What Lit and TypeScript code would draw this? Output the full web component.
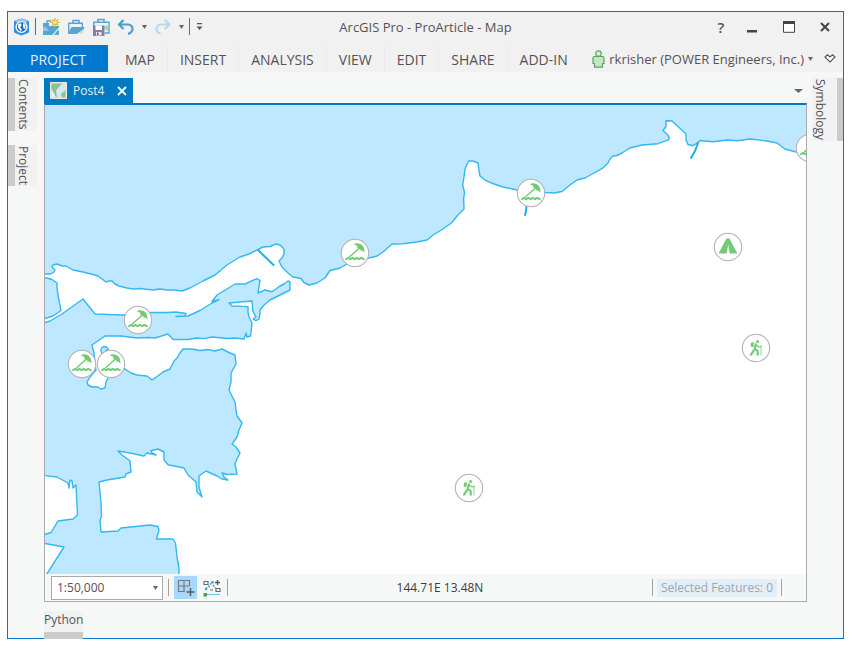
import { LitElement, html, css, svg } from "lit";
import { customElement, property } from "lit/decorators.js";

type MarkerKind = "beach" | "camp" | "trail";

interface Marker {
  kind: MarkerKind;
  x: number;
  y: number;
}

const MARKERS: Marker[] = [
  { kind: "beach", x: 93, y: 215 },
  { kind: "beach", x: 37, y: 259 },
  { kind: "beach", x: 66, y: 259 },
  { kind: "beach", x: 310, y: 148 },
  { kind: "beach", x: 486, y: 88 },
  { kind: "beach", x: 765, y: 43 },
  { kind: "camp", x: 683, y: 142 },
  { kind: "trail", x: 711, y: 243 },
  { kind: "trail", x: 424, y: 383 },
];

const OCEAN =
  "M40 100V274H50.7L54 272L55 270L52 267L53 265L57 264L62 266L66 266L73 270L83 272L93 274.5L98 276L102 279L106 282L109 281L112 281L115 284L119 286L127 288L133 289L140 288.5L153 290L160 289L167 290L174 290L182 291L190 288L203 281L215 275L221 270L227 265L240 257L249 254L257 250L263 247L270 246.5L276 244L280 245L284 249L284 254L282 258L279 261L282 267L288 273L293 277L301 278.5L304 282.5L309 285L317 283L325 278L330 270.5L340 268L347 264L355 260L369 258L377 256L383 252L392 244L403 243.7L417 242L427 240L433 235L443 229L452 222.5L457 216L464 209L463.6 198L464.6 193L462.7 185L464 177L465 169L468.6 161L473 161L478 163L479 171L480 176L486 180.7L494 184L503 187L517 190L530 190L545 192.5L554 193L562 191.5L570 185L577 180L585 178L594 173L602 168.7L608 163L610 159L613 156L617 155.5L622 153L630 148L642 145L658 143.7L669 139.7L669 137L668 135L663 130.5L666 126.5L666 120.7L672 121L678 126.5L686 134L686 140L688 144.5L693 145.7L698 142.5L700 140.5L713 141.7L727 140L737 140.7L750 139L767 141L777 143L785 149L795 151.7L812 154V100Z";

const LAGOON = "M40 278H47L52 279.5L57 283L57 288L58.5 298L61 310.5L53 316L40 320Z";

const HARBOUR =
  "M40 324L50 321L62 314L83 299L95 314L123 315L151 312.5L167 312.5L176 312L186 313.5L185 316L176 316.5L188 316L200 310.5L212 303L219 299.7L212 301.5L217 295L222 292L227 289L235 284L245 284L257 278.6L260 280.6L258 293L265 290L272 291.7L280 286L284 284L288 281L290 282L290 290L280 295L270 300L264 305L260 310L260 314L259 319L256 320.6L253 319L256 317L253 311.5L252 301L240 302L229 303L232 306L248 306.6L248 312L249 317L252 323L250.6 336L247 337L246 333L244 339L235 338L227 338.5L212 337L204 338.6L197 338L188 339.5L173 339.5L170 336L168 334L163 335.5L155 338L148 337.5L137 338L121 336L105 336L92 345L94 353L95 363L96 370L90 377L87 382L88 385L92 387L98 387L101 389L105 388L106 382L108 378L107 372L112 365L125 369L131 373L137 375L147 376L152 380L157 376.5L163 372L170 369L174 361L177 358L180 353L183 349L192 349L200 350.5L208 349.5L215 351L222 349L230 353L235 355L236 364L231 373L231 382L229 390L233 398L235 402L236 410L237 416L242 423L239 430L237 437L232 444L236 447L240 453L237 459L235 464L237 474L227 474.5L222 473L224 477L228 480L222 479L217 476L206 471L199 476L199 487L202 497L197 491.7L196 482L188 475L184 468L168 464.7L164 460L164 452L158 449L151 450.7L152 453L156 455L147 453L144 456L130 453L118 451L122 455L130 460.7L131 472L126 474L125 477L107 480L99 482L101 503L101.5 516L100 521L101 532L118 531L121 528L150 525L158 526.5L159 530L156.5 539L173 539L175.5 543L177 557L179 568V580H43L64 547L40 542.5V534H46L51 532.5L58 521L73 519L77.5 515L76 485L73 488L72 481L70 480L69 488L68 483L57 477L40 475Z";

@customElement("map-canvas")
export class MapCanvas extends LitElement {
  static styles = css`
    :host {
      display: block;
      position: relative;
      overflow: hidden;
      background: #fff;
    }
    .map {
      position: absolute;
      inset: 0;
      width: 100%;
      height: 100%;
      display: block;
    }
    .water {
      fill: #bee8ff;
      stroke: #35b7f1;
      stroke-width: 1.4;
      stroke-linejoin: round;
    }
    .pier {
      fill: none;
      stroke: #22aeea;
      stroke-width: 2;
      stroke-linecap: round;
    }
    .disc {
      fill: #fff;
      stroke: #b4b2b6;
      stroke-width: 1.1;
    }
    .sign {
      fill: #70cc74;
    }
    .line {
      fill: none;
      stroke: #70cc74;
      stroke-linecap: round;
      stroke-linejoin: round;
    }
  `;

  private sign(kind: MarkerKind) {
    if (kind === "beach") {
      return svg`
        <path class="sign" d="M-1.2 -8.8C2 -11.4 10.4 -9.4 9.4 -.4L7.6 -2.2L5.6 -2.4L4.6 -4.6L2.6 -5L2 -7.2Z"/>
        <path class="line" stroke-width="1.4" d="M4.5 -5L-5.4 3.8"/>
        <path class="line" stroke-width="2" d="M-9 6.2L-7 4.8L-4.800 6.2L-2.600 4.800L-.400 6.2L1.800 4.800L4 6.2L6.2 4.800L8.800 6.2"/>`;
    }
    if (kind === "camp") {
      return svg`<path class="sign" d="M-1.6 -8.6H1.4L9.4 6.6H1.8L.2 -2.4L-1.4 6.6H-9.4Z"/>`;
    }
    return svg`
      <circle class="sign" cx="1.6" cy="-6.4" r="1.5"/>
      <path class="sign" d="M-4.8 -5.4L-2 -5.8L-2.6 -.8L-5.4 -1.4Z"/>
      <path class="line" stroke-width="2.2" d="M-.2 -3.6L-1.2 1L-5 6.6M-1 1L1.6 3L1.8 6.6"/>
      <path class="line" stroke-width="1.2" d="M.4 -3L2.6 -1.2L5 -1.4"/>
      <path class="line" stroke-width=".8" d="M5 -2.4V7"/>`;
  }

  render() {
    return html`
      <svg class="map" viewBox="0 0 761 469" preserveAspectRatio="xMidYMid slice" role="img" aria-label="Coastline map">
        <g transform="translate(-45 -105)">
          <path class="water" d=${OCEAN} />
          <path class="water" d=${LAGOON} />
          <path class="water" d=${HARBOUR} />
          <path class="water" d="M102 354Q99 348 104 346.500Q109 347 108.500 351L106 350L105 354Z" />
          <path class="pier" d="M258.500 250.500L273.500 265M526.500 206L526 211L525 215M698 143L695 151L691 158" />
        </g>
        ${MARKERS.map(
          (m) => svg`<g transform="translate(${m.x} ${m.y})"><circle class="disc" r="13.7"/>${this.sign(m.kind)}</g>`
        )}
      </svg>
    `;
  }
}

@customElement("side-tab")
export class SideTab extends LitElement {
  @property() label = "";
  @property({ reflect: true }) edge: "left" | "right" | "bottom" = "left";

  static styles = css`
    :host {
      display: block;
    }
    .tab {
      display: block;
      margin: 0;
      padding: 0;
      border: 0 solid #cbcbcb;
      background: #f2f2f3;
      color: #555257;
      font: 12px/16px "Open Sans", "Noto Sans", sans-serif;
      white-space: nowrap;
      text-align: start;
    }
    .left,
    .right {
      writing-mode: vertical-rl;
    }
    .left {
      border-left-width: 7px;
      padding: 1px 6px 1px 0;
    }
    .right {
      border-right-width: 6px;
      padding: 1px 9px 1px 0;
    }
    .bottom {
      border-bottom-width: 7px;
      padding-bottom: 3px;
      line-height: 18px;
    }
  `;

  render() {
    return html`<button class="tab ${this.edge}">${this.label}</button>`;
  }
}

@customElement("app-root")
export class AppRoot extends LitElement {
  private tabs = ["MAP", "INSERT", "ANALYSIS", "VIEW", "EDIT", "SHARE", "ADD-IN"];

  static styles = css`
    :host {
      display: flex;
      box-sizing: border-box;
      min-height: 100vh;
      padding: 11px 8px 10px 7px;
      background: #fff;
      color: #555257;
      font: 13px/18px "Open Sans", "Noto Sans", sans-serif;
    }
    button,
    select {
      margin: 0;
      padding: 0;
      border: 0;
      background: none;
      color: inherit;
      font: inherit;
    }
    svg {
      display: block;
      flex: none;
    }
    .window {
      flex: 1;
      min-width: 0;
      display: flex;
      flex-direction: column;
      border: 1px solid #0b74c4;
      background: #f6f8f8;
    }
    .head {
      background: #f1f1f1;
    }
    .titlebar {
      display: grid;
      grid-template-columns: 1fr auto 1fr;
      align-items: center;
      height: 29px;
      margin-bottom: 4px;
    }
    .quick {
      display: flex;
      align-items: center;
      gap: 7px;
      padding-left: 5px;
    }
    .quick .rule {
      margin: 0 -1px 0 -2px;
    }
    .history {
      display: flex;
      align-items: center;
      gap: 7px;
    }
    .controls {
      display: flex;
      justify-content: flex-end;
      align-items: center;
      gap: 17px;
      padding-right: 9px;
    }
    .help {
      width: 8px;
      font-size: 15px;
      font-weight: 600;
    }
    .ribbon {
      display: flex;
      align-items: stretch;
      height: 27px;
    }
    .tab {
      padding: 2px 12px 0;
      border-right: 1px solid #eaeaea;
      font-size: 14px;
      white-space: nowrap;
    }
    .tab:nth-child(2) {
      padding-left: 16px;
    }
    .tab:last-of-type {
      border-right: 0;
    }
    .project {
      width: 101px;
      background: #0078d0;
      color: #e3f1fb;
    }
    .account {
      display: flex;
      align-items: center;
      gap: 11px;
      margin-left: auto;
      padding-right: 7px;
    }
    .user {
      display: flex;
      align-items: center;
      gap: 4px;
      white-space: nowrap;
    }
    .body {
      flex: 1;
      display: grid;
      grid-template-columns: 36px 1fr 36px;
      padding-top: 6px;
    }
    .dock {
      display: flex;
      flex-direction: column;
      align-items: flex-start;
      gap: 14px;
    }
    .dock.end {
      align-items: flex-end;
    }
    .pane {
      display: flex;
      flex-direction: column;
      min-width: 0;
    }
    .views {
      display: flex;
      justify-content: space-between;
      align-items: center;
      height: 25px;
      padding-right: 4px;
    }
    .view {
      display: flex;
      align-items: center;
      gap: 6px;
      height: 25px;
      padding: 0 5px 0 6px;
      background: #007ac2;
      color: #e3f1fb;
      font-size: 12px;
    }
    .view svg:last-child {
      margin-left: 6px;
    }
    .frame {
      flex: 1;
      display: flex;
      flex-direction: column;
      border: 1px solid #a9aaae;
      border-top: 2px solid #0078d0;
    }
    .canvas {
      flex: 1;
    }
    .status {
      display: grid;
      grid-template-columns: auto 1fr auto;
      align-items: center;
      height: 27px;
      padding: 0 24px 0 6px;
      font-size: 12px;
    }
    .tools {
      display: flex;
      align-items: center;
      gap: 5px;
    }
    .rule {
      flex: none;
      width: 1px;
      height: 17px;
      background: #a3a1a4;
    }
    .quick .rule {
      background: #6b696c;
    }
    .scale {
      position: relative;
      width: 112px;
    }
    .scale select {
      appearance: none;
      box-sizing: border-box;
      width: 100%;
      height: 24px;
      padding-left: 5px;
      border: 1px solid #a9a9ab;
      background: #fff;
    }
    .scale svg {
      position: absolute;
      top: 10px;
      right: 5px;
      pointer-events: none;
    }
    .toggle {
      display: grid;
      place-items: center;
      width: 23px;
      height: 23px;
    }
    .toggle.on {
      background: #a9d9f8;
    }
    .toggle.plain {
      width: 20px;
    }
    .coords {
      color: #3f3c41;
      text-align: center;
    }
    .selection {
      display: flex;
      align-items: center;
      gap: 4px;
    }
    .count {
      padding: 0 4px;
      background: #e2effa;
      color: #a2a5a9;
      white-space: nowrap;
    }
    .foot {
      display: flex;
      padding: 9px 36px 0;
      height: 36px;
      box-sizing: border-box;
    }
  `;

  private caret(width = 5, color = "#666") {
    return html`<svg width=${width} height="4" viewBox="0 0 6 4" preserveAspectRatio="none" aria-hidden="true">
      <path d="M0 0H6L3 4Z" fill=${color} />
    </svg>`;
  }

  private renderTitleBar() {
    return html`
      <div class="titlebar">
        <div class="quick">
          <svg width="17" height="18" viewBox="0 0 17 18" aria-hidden="true">
            <path d="M8.500 .5L15 2.500Q16 3 16 4V13.500Q16 14.500 15 15L8.500 17.500L2 15Q1 14.500 1 13.500V4Q1 3 2 2.500Z" fill="#2f8fe6" />
            <path d="M8.500 .5L15 2.500L13 5L8.500 2.500L4 5L2 2.500Z" fill="#8ec8f6" />
            <circle cx="8.500" cy="9" r="5.400" fill="#1767c4" stroke="#fff" stroke-width="1.300" />
            <path d="M5 6.500L8 5L8.500 7.500L7 9.500L8.800 11L8 13.500L6.500 11.500L5 9.500ZM10 5L12.500 7V10.500L10.800 11L10 8.500Z" fill="#fff" />
          </svg>
          <span class="rule"></span>
          <button aria-label="New project">
            <svg width="18" height="18" viewBox="0 0 18 18">
              <path d="M5 5V3H9" fill="none" stroke="#58a5ce" stroke-width="1.500" />
              <path d="M1 5H7V8H17V17H1Z" fill="#58a5ce" />
              <path d="M1 9H4L7 13H1Z" fill="#8cc6e4" />
              <path d="M10 17L17 9V17Z" fill="#d4e8c8" />
              <path d="M12.500 17Q14 13 17 12V17Z" fill="#5ba7cf" />
              <path d="M13 0V9M8.500 4.500H17.500M10 1.500L16 7.500M16 1.500L10 7.500" stroke="#e4b43c" stroke-width="1.200" />
              <circle cx="13" cy="4.500" r="2.400" fill="#fbe79a" stroke="#e4b43c" />
            </svg>
          </button>
          <button aria-label="Open project">
            <svg width="18" height="18" viewBox="0 0 18 18">
              <path d="M6 5V2.500H12V5" fill="none" stroke="#58a5ce" stroke-width="1.500" />
              <path d="M1.700 15V5.200H15.300V9" fill="#eaf5fb" stroke="#58a5ce" stroke-width="1.400" />
              <path d="M1 16L4.500 9H17.500L15 16Z" fill="#58a5ce" />
              <path d="M9.500 16L16.800 11L15 16Z" fill="#d4e8c8" />
            </svg>
          </button>
          <button aria-label="Save project">
            <svg width="18" height="18" viewBox="0 0 18 18">
              <path d="M6 4V1.500H12V4" fill="none" stroke="#58a5ce" stroke-width="1.500" />
              <path d="M1.700 9V4.200H17V15H13" fill="#eaf5fb" stroke="#58a5ce" stroke-width="1.400" />
              <path d="M12 8.500L16.500 7V14L13 11Z" fill="#a9d4b4" />
              <path d="M1 7.500H12.500V18H1Z" fill="#8a7ba4" />
              <path d="M3.500 7.500H10V12H3.500Z" fill="#fff" />
              <path d="M4 14H9.500V17.500H4Z" fill="#e9e4f0" />
              <path d="M5 14.500H6.500V17H5Z" fill="#6b5a8c" />
            </svg>
          </button>
          <div class="history">
            <button aria-label="Undo">
              <svg width="18" height="16" viewBox="0 0 18 16">
                <path d="M6.500 1L2 5.500L6.500 10M2.500 5.500H11Q15.500 6 15.500 10Q15.500 13.500 11 15" fill="none" stroke="#4b9fd0" stroke-width="2.200" />
              </svg>
            </button>
            <button aria-label="Undo history">${this.caret()}</button>
            <button aria-label="Redo">
              <svg width="18" height="16" viewBox="0 0 18 16">
                <path d="M11 1L15.500 5.500L11 10M15 5.500H7Q2.500 6 2.500 10Q2.500 13.500 6.500 14.500" fill="none" stroke="#b9d9ea" stroke-width="2.200" />
              </svg>
            </button>
            <button aria-label="Redo history">${this.caret()}</button>
          </div>
          <span class="rule"></span>
          <button aria-label="Customize toolbar">
            <svg width="7" height="8" viewBox="0 0 7 8">
              <path d="M1 0H6V1.300H1ZM.5 3.500H6.500L3.500 7Z" fill="#555" />
            </svg>
          </button>
        </div>
        <div class="title">ArcGIS Pro - ProArticle - Map</div>
        <div class="controls">
          <button class="help" aria-label="Help">?</button>
          <button aria-label="Minimize">
            <svg width="20" height="12" viewBox="0 0 20 12"><path d="M5 9H15V11.500H5Z" fill="#444" /></svg>
          </button>
          <button aria-label="Maximize">
            <svg width="20" height="12" viewBox="0 0 20 12">
              <path d="M4.500 1H15.500V11.300H4.500Z" fill="#fff" stroke="#444" />
              <path d="M4 0H16V3H4Z" fill="#444" />
            </svg>
          </button>
          <button aria-label="Close">
            <svg width="18" height="12" viewBox="0 0 18 12">
              <path d="M5 2L13 10M13 2L5 10" stroke="#444" stroke-width="2" />
            </svg>
          </button>
        </div>
      </div>
    `;
  }

  private renderRibbon() {
    return html`
      <nav class="ribbon">
        <button class="tab project">PROJECT</button>
        ${this.tabs.map((t) => html`<button class="tab">${t}</button>`)}
        <div class="account">
          <button class="user">
            <svg width="13" height="18" viewBox="0 0 13 18" aria-hidden="true">
              <path d="M1 8Q1 6.500 2.500 6.500H10.500Q12 6.500 12 8V13.500H10.500V17.200H2.500V13.500H1Z" fill="#c4e6c4" stroke="#58a55c" stroke-width="1.200" />
              <circle cx="6.500" cy="3.600" r="2.800" fill="#d8efd8" stroke="#58a55c" stroke-width="1.200" />
            </svg>
            <span>rkrisher (POWER Engineers, Inc.)</span>
            ${this.caret()}
          </button>
          <button aria-label="Collapse ribbon">
            <svg width="12" height="9" viewBox="0 0 12 9">
              <path d="M1 3L3.500 .8L6 3L8.500 .8L11 3L6 8Z" fill="#fff" stroke="#555" stroke-width="1.100" />
            </svg>
          </button>
        </div>
      </nav>
    `;
  }

  private renderStatus() {
    return html`
      <div class="status">
        <div class="tools">
          <label class="scale">
            <select aria-label="Map scale">
              <option>1:50,000</option>
            </select>
            ${this.caret()}
          </label>
          <span class="rule"></span>
          <button class="toggle on" aria-label="Snap to grid">
            <svg width="18" height="18" viewBox="0 0 18 18">
              <path d="M1.500 1.500H12.500V7M1.500 1.500V12.500H8M7 1.500V12.500M1.500 7H12.500" fill="none" stroke="#777b82" stroke-width="1.200" />
              <path d="M13.500 9V17M9.500 13H17.500" stroke="#5a5d62" stroke-width="1.500" />
            </svg>
          </button>
          <button class="toggle plain" aria-label="Dynamic constraints">
            <svg width="18" height="18" viewBox="0 0 18 18">
              <path d="M1 2.500H5V5.500H1ZM13 9.500H17V12.500H13Z" fill="#fff" stroke="#666" stroke-width="1.100" />
              <path d="M14.500 1V6M12 3.500H17" stroke="#555" stroke-width="1.300" />
              <path d="M3 10L9 3.500M10 6L14 11" fill="none" stroke="#4fa6d8" stroke-width="1.300" stroke-dasharray="2 1" />
              <path d="M7 11H10M6 8H7" stroke="#666" />
              <path d="M4 15.500H17" stroke="#7cc4ee" stroke-width="1.200" />
              <circle cx="9.500" cy="3.300" r="1.300" fill="#3d9ad2" />
              <circle cx="3" cy="10" r="1.200" fill="#3d9ad2" />
              <path d="M.5 14H4V17.500H.5Z" fill="#47a057" />
            </svg>
          </button>
          <span class="rule"></span>
        </div>
        <div class="coords">144.71E 13.48N</div>
        <div class="selection">
          <span class="rule"></span>
          <span class="count">Selected Features: 0</span>
          <span class="rule"></span>
        </div>
      </div>
    `;
  }

  render() {
    return html`
      <div class="window">
        <header class="head">${this.renderTitleBar()} ${this.renderRibbon()}</header>
        <main class="body">
          <aside class="dock">
            <side-tab label="Contents"></side-tab>
            <side-tab label="Project"></side-tab>
          </aside>
          <section class="pane">
            <div class="views">
              <button class="view">
                <svg width="17" height="17" viewBox="0 0 17 17" aria-hidden="true">
                  <path d="M.5 .5H16.500V16.500H.5Z" fill="#cfeaf2" stroke="#efe9e4" />
                  <path d="M1.500 1.500H12L8 6L6 9L7 15.500H1.500Z" fill="#8fbf94" />
                  <path d="M1.500 7L6 15.500H1.500Z" fill="#eef6ee" />
                  <path d="M15.500 8L11 12L12 15.500H15.500Z" fill="#8fbf94" />
                </svg>
                <span>Post4</span>
                <svg width="12" height="12" viewBox="0 0 12 12" aria-hidden="true">
                  <path d="M2 2L10 10M10 2L2 10" stroke="#fff" stroke-width="1.800" />
                </svg>
              </button>
              <button aria-label="View list">${this.caret(9)}</button>
            </div>
            <div class="frame">
              <map-canvas class="canvas"></map-canvas>
              ${this.renderStatus()}
            </div>
          </section>
          <aside class="dock end">
            <side-tab edge="right" label="Symbology"></side-tab>
          </aside>
        </main>
        <footer class="foot">
          <side-tab edge="bottom" label="Python"></side-tab>
        </footer>
      </div>
    `;
  }
}
